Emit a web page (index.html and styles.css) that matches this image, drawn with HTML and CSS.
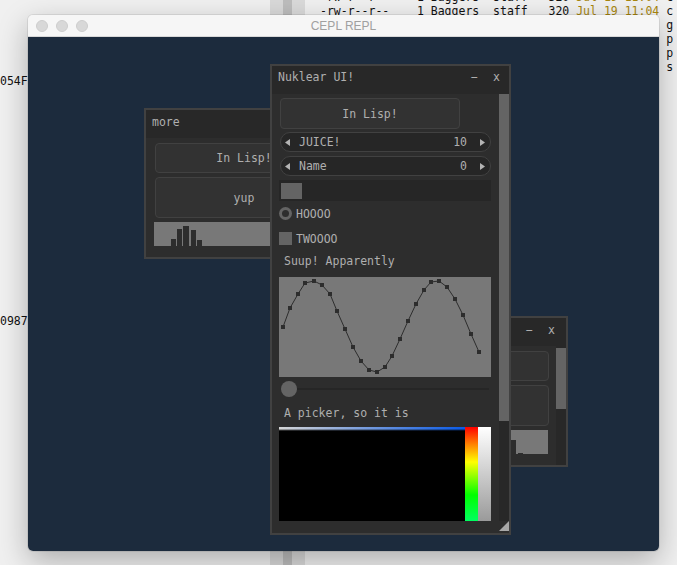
FILE: index.html
```html
<!DOCTYPE html>
<html lang="en">
<head>
<meta charset="utf-8">
<title>CEPL REPL</title>
<link rel="stylesheet" href="styles.css">
</head>
<body>
<div class="desk">
  <div class="split"><div class="split-a"></div><div class="split-b"></div><div class="split-c"></div></div>
  <div class="term-left">
    <div class="tl-line tl-1">054F3C9A17</div>
    <div class="tl-line tl-2">098791E2B4</div>
  </div>
  <div class="term">
    <div class="tline">-rw-r--r--    1 Baggers  staff   320 <span class="date">Jul 19 11:04</span> c</div>
    <div class="tline">-rw-r--r--    1 Baggers  staff   320 <span class="date">Jul 19 11:04</span> c</div>
    <div class="tline"><span class="tail">g</span></div>
    <div class="tline"><span class="tail">p</span></div>
    <div class="tline"><span class="tail">p</span></div>
    <div class="tline"><span class="tail">s</span></div>
  </div>

  <div class="mac">
    <div class="mac-bar">
      <div class="lights"><span class="light"></span><span class="light"></span><span class="light"></span></div>
      <div class="mac-title">CEPL REPL</div>
      <div class="mac-bar-end"></div>
    </div>
    <div class="mac-content">

      <section class="nk-win small win-more">
        <header class="nk-head"><span class="nk-title">more</span><span class="nk-sym">−</span><span class="nk-sym">x</span></header>
        <div class="nk-body">
          <div class="nk-content small-content">
            <div class="btn btn-a">In Lisp!</div>
            <div class="btn btn-b">yup</div>
            <div class="bar-chart">
              <svg width="178" height="24" viewBox="0 0 178 24">
                <g fill="#2d2d2d">
                  <rect x="17" y="17" width="5" height="7"/>
                  <rect x="23" y="7" width="5" height="17"/>
                  <rect x="29" y="4" width="6" height="20"/>
                  <rect x="37" y="8" width="5" height="16"/>
                  <rect x="43" y="18" width="5" height="6"/>
                </g>
              </svg>
            </div>
          </div>
          <div class="nk-scroll small-scroll"><div class="nk-cursor small-cursor"></div></div>
        </div>
      </section>

      <section class="nk-win small win-right">
        <header class="nk-head"><span class="nk-title">more</span><span class="nk-sym">−</span><span class="nk-sym">x</span></header>
        <div class="nk-body">
          <div class="nk-content small-content">
            <div class="btn btn-a">In Lisp!</div>
            <div class="btn btn-b">yup</div>
            <div class="bar-chart">
              <svg width="178" height="24" viewBox="0 0 178 24">
                <g fill="#2d2d2d">
                  <rect x="141" y="10" width="5" height="14"/>
                  <rect x="148" y="23" width="5" height="1"/>
                </g>
              </svg>
            </div>
          </div>
          <div class="nk-scroll small-scroll"><div class="nk-cursor small-cursor"></div></div>
        </div>
      </section>

      <section class="nk-win win-main">
        <header class="nk-head main-head"><span class="nk-title">Nuklear UI!</span><span class="nk-sym">−</span><span class="nk-sym">x</span></header>
        <div class="nk-body main-body">
          <div class="nk-content main-content">
            <div class="btn btn-main">In Lisp!</div>
            <div class="prop prop-first">
              <svg class="arrow" width="5" height="7" viewBox="0 0 5 7"><polygon points="5,0 5,7 0,3.5"/></svg>
              <span class="prop-name">JUICE!</span>
              <span class="prop-val">10</span>
              <svg class="arrow" width="5" height="7" viewBox="0 0 5 7"><polygon points="0,0 0,7 5,3.5"/></svg>
            </div>
            <div class="prop">
              <svg class="arrow" width="5" height="7" viewBox="0 0 5 7"><polygon points="5,0 5,7 0,3.5"/></svg>
              <span class="prop-name">Name</span>
              <span class="prop-val">0</span>
              <svg class="arrow" width="5" height="7" viewBox="0 0 5 7"><polygon points="0,0 0,7 5,3.5"/></svg>
            </div>
            <div class="progress"><div class="progress-fill"></div></div>
            <div class="opt radio-row"><span class="radio"></span><span class="opt-text">HOOOO</span></div>
            <div class="opt check-row"><span class="check"></span><span class="opt-text">TWOOOO</span></div>
            <div class="label label-suup">Suup! Apparently</div>
            <div class="line-chart">
              <svg width="212" height="100" viewBox="0 0 212 100">
                <polyline fill="none" stroke="#2d2d2d" stroke-width="1" points="4,50 11,31 19,17 26,6 35,4 43,8 51,17 58,34 66,52 74,70 82,84 90,93 98,95 106,90 113,79 121,62 129,44 137,27 145,13 152,5 160,4 168,10 176,22 184,38 192,57 200,75"/>
                <g fill="#2d2d2d">
                  <rect x="2" y="48" width="4" height="4"/><rect x="9" y="29" width="4" height="4"/><rect x="17" y="15" width="4" height="4"/><rect x="24" y="4" width="4" height="4"/><rect x="33" y="2" width="4" height="4"/><rect x="41" y="6" width="4" height="4"/><rect x="49" y="15" width="4" height="4"/><rect x="56" y="32" width="4" height="4"/><rect x="64" y="50" width="4" height="4"/><rect x="72" y="68" width="4" height="4"/><rect x="80" y="82" width="4" height="4"/><rect x="88" y="91" width="4" height="4"/><rect x="96" y="93" width="4" height="4"/><rect x="104" y="88" width="4" height="4"/><rect x="111" y="77" width="4" height="4"/><rect x="119" y="60" width="4" height="4"/><rect x="127" y="42" width="4" height="4"/><rect x="135" y="25" width="4" height="4"/><rect x="143" y="11" width="4" height="4"/><rect x="150" y="3" width="4" height="4"/><rect x="158" y="2" width="4" height="4"/><rect x="166" y="8" width="4" height="4"/><rect x="174" y="20" width="4" height="4"/><rect x="182" y="36" width="4" height="4"/><rect x="190" y="55" width="4" height="4"/><rect x="198" y="73" width="4" height="4"/>
                </g>
              </svg>
            </div>
            <div class="slider"><span class="knob"></span><span class="track"></span></div>
            <div class="label label-picker">A picker, so it is</div>
            <div class="picker">
              <div class="sv"></div>
              <div class="hue"></div>
              <div class="alpha"></div>
            </div>
          </div>
          <div class="nk-scroll main-scroll"><div class="nk-cursor main-cursor"></div></div>
        </div>
        <footer class="nk-foot"><span class="grip"></span></footer>
      </section>

    </div>
  </div>
</div>
</body>
</html>
```
FILE: styles.css
```css
* { box-sizing: border-box; }
html, body { margin: 0; padding: 0; }
body {
  width: 677px;
  height: 565px;
  overflow: hidden;
  background: #efefef;
  font-family: "DejaVu Sans Mono", monospace;
}
.desk {
  position: relative;
  width: 677px;
  height: 565px;
  overflow: hidden;
  background: #f0f0f0;
}

/* terminal behind */
.split {
  position: absolute;
  left: 270px;
  top: 0;
  height: 565px;
  display: flex;
}
.split-a { width: 13px; background: #d9d9d9; }
.split-b { width: 9px; background: #bdbdbd; }
.split-c { width: 13px; background: #dadada; }

.term-left {
  position: absolute;
  left: 0;
  top: 0;
  font: 11.5px/14px "DejaVu Sans Mono", monospace;
  color: #111;
}
.tl-line { white-space: pre; }
.tl-1 { margin-top: 74px; }
.tl-2 { margin-top: 226px; }

.term {
  position: absolute;
  left: 320px;
  top: -10px;
  font: 11.5px/14px "DejaVu Sans Mono", monospace;
  color: #111;
}
.tline { white-space: pre; height: 14px; }
.tail { margin-left: 50ch; }
.date { color: #a8860e; }

/* mac window */
.mac {
  position: absolute;
  left: 28px;
  top: 15px;
  width: 631px;
  height: 536px;
  border-radius: 5px;
  overflow: hidden;
  display: flex;
  flex-direction: column;
  box-shadow: 0 0 0 1px rgba(0,0,0,0.08), 0 10px 30px rgba(0,0,0,0.28);
}
.mac-bar {
  height: 22px;
  flex: none;
  background: #f6f6f6;
  border-bottom: 1px solid #d8d8d8;
  display: grid;
  grid-template-columns: 1fr auto 1fr;
  align-items: center;
}
.lights { display: flex; gap: 8px; padding-left: 8px; }
.light {
  width: 12px;
  height: 12px;
  border-radius: 50%;
  background: #d8d8d8;
  border: 1px solid #cdcdcd;
}
.mac-title {
  font: 12px "Liberation Sans", Arial, sans-serif;
  color: #a0a0a0;
}
.mac-content {
  flex: 1;
  position: relative;
  background: #1c2b3d;
}

/* nuklear windows */
.nk-win {
  position: absolute;
  border: 2px solid #414141;
  background: #2d2d2d;
  display: flex;
  flex-direction: column;
  color: #afafaf;
  font: 11.5px/14px "DejaVu Sans Mono", monospace;
}
.win-more { left: 116px; top: 71px; width: 208px; height: 151px; }
.win-right { left: 332px; top: 279px; width: 208px; height: 151px; }
.win-main { left: 242px; top: 27px; width: 241px; height: 471px; }

.nk-head {
  height: 28px;
  flex: none;
  background: #282828;
  display: flex;
  align-items: flex-start;
  padding: 5px 11px 0 6px;
}
.main-head { padding: 4px 9px 0 6px; }
.nk-title { flex: 1; }
.nk-sym { width: 7px; text-align: center; }
.nk-sym + .nk-sym { margin-left: 15px; }

.nk-body { display: flex; flex: 1; min-height: 0; }
.nk-content {
  flex: 1;
  min-width: 0;
  overflow: hidden;
  display: flex;
  flex-direction: column;
}
.nk-scroll { width: 10px; flex: none; background: #282828; }
.nk-cursor { background: #646464; }

/* small windows */
.small-content { padding: 5px 7px 0 8px; }
.small-scroll { padding-top: 2px; }
.small-cursor { height: 61px; }

.btn {
  border: 1px solid #414141;
  border-radius: 4px;
  background: #323232;
  display: flex;
  align-items: center;
  justify-content: center;
  flex: none;
}
.btn-a { margin-left: 1px; width: 178px; height: 30px; }
.btn-b { margin: 4px 0 0 1px; width: 178px; height: 41px; }
.bar-chart {
  margin-top: 4px;
  width: 178px;
  height: 24px;
  background: #787878;
  flex: none;
}
.bar-chart svg, .line-chart svg { display: block; }

/* main window */
.main-body { flex: none; height: 427px; }
.main-content { padding: 4px 8px 0 7px; }
.main-cursor { height: 327px; }

.btn-main { margin-left: 1px; width: 180px; height: 31px; }

.prop {
  flex: none;
  margin: 4px 0 0 1px;
  height: 20px;
  border: 1px solid #414141;
  border-radius: 10px;
  background: #262626;
  display: flex;
  align-items: center;
  padding: 0 5px 0 4px;
}
.prop-first { margin-top: 3px; }
.arrow { display: block; fill: #b4b4b4; flex: none; }
.prop-name { margin-left: 9px; flex: 1; }
.prop-val { margin-right: 13px; }

.progress {
  flex: none;
  margin-top: 4px;
  height: 21px;
  background: #262626;
  padding: 3px 0 2px 2px;
}
.progress-fill { width: 21px; height: 100%; background: #646464; }

.opt {
  flex: none;
  height: 13px;
  display: flex;
  align-items: center;
  gap: 4px;
}
.radio-row { margin-top: 6px; }
.check-row { margin-top: 12px; }
.radio {
  width: 13px;
  height: 13px;
  border-radius: 50%;
  background: #646464;
  display: flex;
  align-items: center;
  justify-content: center;
}
.radio::after {
  content: "";
  width: 7px;
  height: 7px;
  border-radius: 50%;
  background: #2d2d2d;
}
.check { width: 13px; height: 13px; background: #646464; }

.label { flex: none; height: 14px; padding-left: 5px; white-space: pre; }
.label-suup { margin-top: 9px; }
.label-picker { margin-top: 9px; }

.line-chart {
  flex: none;
  margin-top: 9px;
  height: 100px;
  background: #787878;
}

.slider {
  flex: none;
  margin-top: 4px;
  height: 16px;
  display: flex;
  align-items: center;
  padding: 0 2px;
}
.knob {
  width: 16px;
  height: 16px;
  border-radius: 50%;
  background: #646464;
  flex: none;
}
.track { flex: 1; height: 2px; background: #262626; }

.picker {
  flex: none;
  margin-top: 7px;
  height: 210px;
  display: flex;
}
.sv {
  width: 186px;
  background:
    linear-gradient(to bottom, rgba(0,0,0,0) 0, rgba(0,0,0,0) 2px, rgba(0,0,0,0.6) 3px, #000 4px),
    linear-gradient(to right, #d6d6d6, #0a5ae6);
}
.hue {
  width: 13px;
  background: linear-gradient(to bottom, #ff0000 0, #ff8000 17px, #ffff00 35px, #00ff00 68px, #00ff60 94px, #00ffff 130px);
}
.alpha {
  width: 13px;
  background: linear-gradient(to bottom, #ffffff 0, #9a9a9a 94px, #555555 210px);
}

.nk-foot {
  flex: none;
  height: 12px;
  display: flex;
  justify-content: flex-end;
  align-items: flex-start;
}
.grip {
  width: 10px;
  height: 10px;
  background: #a8a8a8;
  clip-path: polygon(100% 0, 100% 100%, 0 100%);
}
```
